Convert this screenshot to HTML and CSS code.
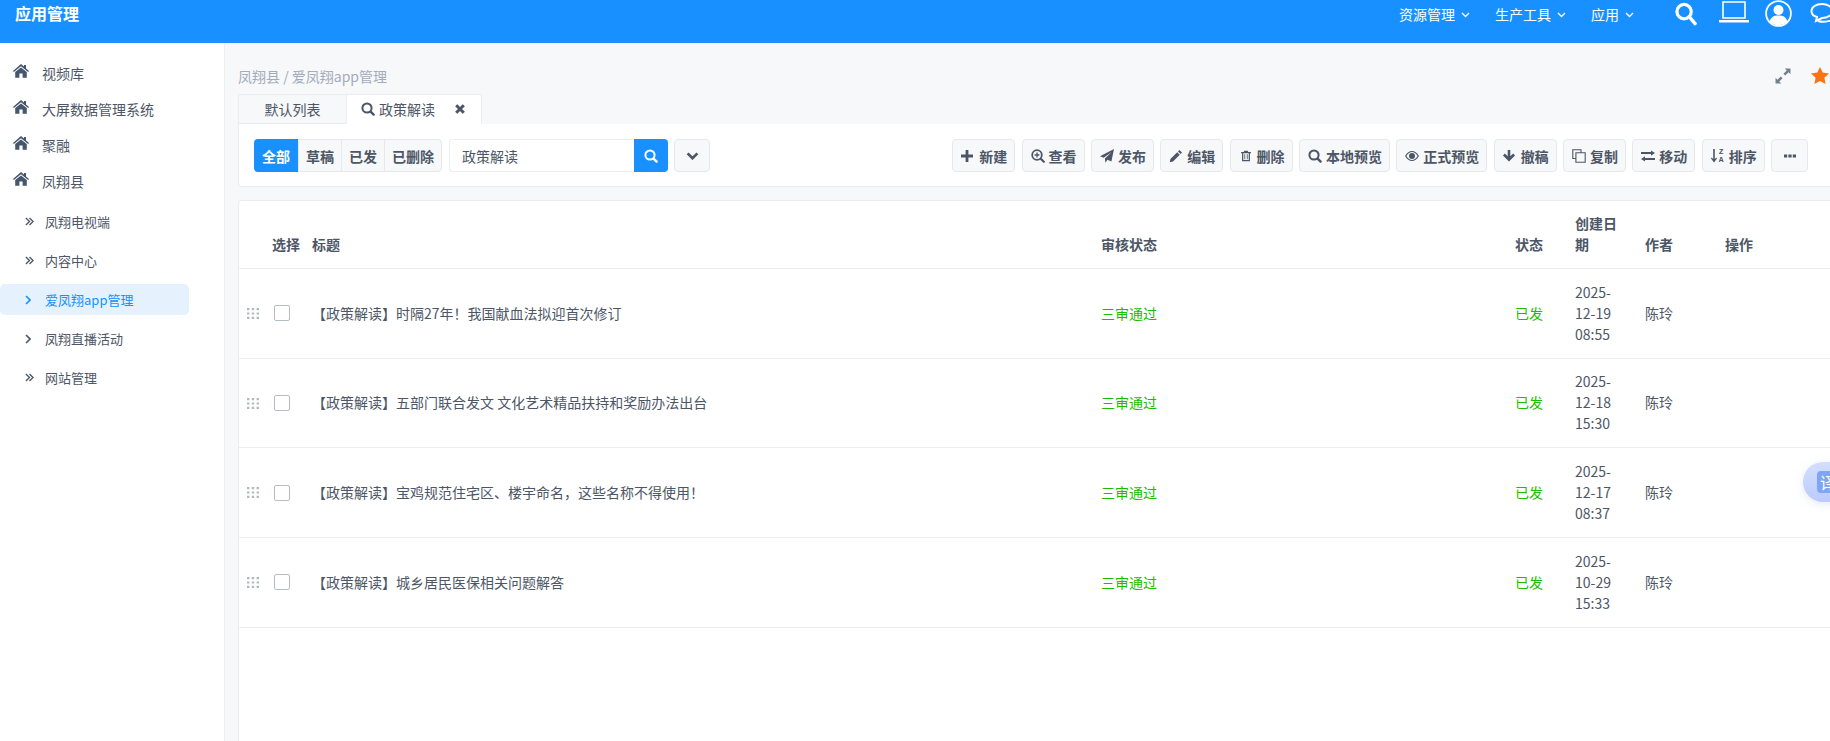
FILE: index.html
```html
<!DOCTYPE html>
<html lang="zh-CN">
<head>
    <meta charset="UTF-8">
    <meta name="viewport" content="width=device-width, initial-scale=1.0">
    <title>应用管理</title>
    <link rel="stylesheet" href="styles.css">
</head>
<body>
    <svg class="sprite" xmlns="http://www.w3.org/2000/svg">
        <symbol id="i-home" viewBox="0 0 16 14"><path d="M8 0 L11 2.6 V1 H13 V4.4 L16 7 L15.2 8 L8 2.2 L0.8 8 L0 7 Z M8 3.4 L13.8 8 V13.8 H9.6 V9.6 H6.4 V13.8 H2.2 V8 Z"/></symbol>
        <symbol id="i-caret" viewBox="0 0 9 6"><path fill="none" stroke="currentColor" stroke-width="1.4" d="M1 1 L4.5 4.5 L8 1"/></symbol>
        <symbol id="i-search" viewBox="0 0 14 14"><path fill="none" stroke="currentColor" stroke-width="2" d="M6 1.4 A4.6 4.6 0 1 0 6 10.6 A4.6 4.6 0 1 0 6 1.4 Z"/><path fill="none" stroke="currentColor" stroke-width="2.4" stroke-linecap="round" d="M9.6 9.6 L12.6 12.6"/></symbol>
        <symbol id="i-close" viewBox="0 0 10 10"><path fill="none" stroke="currentColor" stroke-width="3" d="M1.2 1.2 L8.8 8.8 M8.8 1.2 L1.2 8.8"/></symbol>
        <symbol id="i-down" viewBox="0 0 14 9"><path fill="none" stroke="currentColor" stroke-width="3" d="M1.5 1.5 L7 7 L12.5 1.5"/></symbol>
        <symbol id="i-plus" viewBox="0 -1 14 14"><path d="M4.6 0 H7.4 V4.6 H12 V7.4 H7.4 V12 H4.6 V7.4 H0 V4.6 H4.6 Z"/></symbol>
        <symbol id="i-zoom" viewBox="0 0 14 14"><path fill="none" stroke="currentColor" stroke-width="1.8" d="M6 1.2 A4.8 4.8 0 1 0 6 10.8 A4.8 4.8 0 1 0 6 1.2 Z"/><path fill="none" stroke="currentColor" stroke-width="2.2" stroke-linecap="round" d="M9.8 9.8 L12.8 12.8"/><path fill="none" stroke="currentColor" stroke-width="1.3" d="M6 3.6 V8.4 M3.6 6 H8.4"/></symbol>
        <symbol id="i-plane" viewBox="0 0 14 14"><path d="M14 0 L11.4 12.6 L7.4 10.8 L5.4 13.8 L4.9 9.6 L11.6 3 L3.6 8.8 L0 7.2 Z"/></symbol>
        <symbol id="i-pencil" viewBox="0 0 14 14"><path d="M10.4 1 L13 3.6 L11.6 5 L9 2.4 Z M8.2 3.2 L10.8 5.8 L4 12.6 L0.8 13.2 L1.4 10 Z"/></symbol>
        <symbol id="i-trash" viewBox="-1 -1.5 14 17"><path fill-rule="evenodd" d="M4 0.5 H8 L8.8 2.2 H12 V3.6 H10.8 V13.5 H1.2 V3.6 H0 V2.2 H3.2 Z M2.7 3.6 V12 H9.3 V3.6 Z M4 5 H5 V10.8 H4 Z M7 5 H8 V10.8 H7 Z"/></symbol>
        <symbol id="i-eye" viewBox="0 0 14 10"><path fill-rule="evenodd" d="M0 5 C2 1.6 4.4 0 7 0 C9.6 0 12 1.6 14 5 C12 8.4 9.6 10 7 10 C4.4 10 2 8.4 0 5 Z M1.4 5 C3 7.6 5 8.9 7 8.9 C9 8.9 11 7.6 12.6 5 C11 2.4 9 1.1 7 1.1 C5 1.1 3 2.4 1.4 5 Z M7 2 A3 3 0 1 1 7 8 A3 3 0 1 1 7 2 Z"/></symbol>
        <symbol id="i-arrow" viewBox="0 -1 14 14"><path d="M4.7 0 H7.3 V6.2 L10.2 3.6 L12 5.4 L6 11.6 L0 5.4 L1.8 3.6 L4.7 6.2 Z"/></symbol>
        <symbol id="i-copy" viewBox="0 0 14 14"><path fill="none" stroke="currentColor" stroke-width="1.1" d="M9 3.5 V0.8 H0.8 V9.5 H3.6 M3.9 3.8 H13.2 V13.2 H3.9 Z"/></symbol>
        <symbol id="i-swap" viewBox="0 0 14 11"><path d="M0 1.6 H10 V0 L14 2.6 L10 5.2 V3.6 H0 Z M14 7.4 H4 V5.8 L0 8.4 L4 11 V9.4 H14 Z"/></symbol>
        <symbol id="i-more" viewBox="0 0 12 4"><path d="M0 0.5 H3.2 V3.5 H0 Z M4.4 0.5 H7.6 V3.5 H4.4 Z M8.8 0.5 H12 V3.5 H8.8 Z"/></symbol>
        <symbol id="i-expand" viewBox="0 0 15 15"><path d="M9.2 0.5 H14.5 V5.8 L12.7 4 L9.6 7.1 L7.9 5.4 L11 2.3 Z M0.5 14.5 V9.2 L2.3 11 L5.4 7.9 L7.1 9.6 L4 12.7 L5.8 14.5 Z"/></symbol>
        <symbol id="i-star" viewBox="0 0 18 17"><path d="M9 0 L11.7 5.6 L18 6.5 L13.4 10.8 L14.6 17 L9 14 L3.4 17 L4.6 10.8 L0 6.5 L6.3 5.6 Z"/></symbol>
        <symbol id="i-one" viewBox="0 0 6 10"><path fill="none" stroke="currentColor" stroke-width="1.6" d="M1 1 L5 5 L1 9"/></symbol>
        <symbol id="i-two" viewBox="0 0 10 10"><path fill="none" stroke="currentColor" stroke-width="1.5" d="M1 1 L5 5 L1 9 M5 1 L9 5 L5 9"/></symbol>
        <symbol id="i-grip" viewBox="0 0 12 11"><path d="M0 0 H2.4 V2.2 H0 Z M4.8 0 H7.2 V2.2 H4.8 Z M9.6 0 H12 V2.2 H9.6 Z M0 4.4 H2.4 V6.6 H0 Z M4.8 4.4 H7.2 V6.6 H4.8 Z M9.6 4.4 H12 V6.6 H9.6 Z M0 8.8 H2.4 V11 H0 Z M4.8 8.8 H7.2 V11 H4.8 Z M9.6 8.8 H12 V11 H9.6 Z"/></symbol>
    </svg>

    <header class="topbar">
        <div class="app-title">应用管理</div>
        <nav class="topnav">
            <a class="topnav-link">资源管理<svg class="caret"><use href="#i-caret"/></svg></a>
            <a class="topnav-link">生产工具<svg class="caret"><use href="#i-caret"/></svg></a>
            <a class="topnav-link">应用<svg class="caret"><use href="#i-caret"/></svg></a>
        </nav>
        <div class="top-icons">
            <svg class="top-search" viewBox="0 0 23 24"><circle cx="9.5" cy="9.5" r="7.5" fill="none" stroke="#fff" stroke-width="3.4"/><path d="M15 15 L21 22" fill="none" stroke="#fff" stroke-width="3.6" stroke-linecap="round"/></svg>
            <svg class="top-laptop" viewBox="0 0 30 22"><path d="M4 1 H26 V17 H4 Z" fill="none" stroke="#fff" stroke-width="1.6"/><path d="M0 19 H30 V21.5 H0 Z" fill="#fff"/></svg>
            <svg class="top-user" viewBox="0 0 27 27"><circle cx="13.5" cy="13.5" r="12.4" fill="none" stroke="#fff" stroke-width="1.8"/><circle cx="13.5" cy="10" r="5" fill="#fff"/><path d="M4.8 21.5 C6 16.5 9 15.5 13.5 15.5 C18 15.5 21 16.5 22.2 21.5 C18 26.5 9 26.5 4.8 21.5 Z" fill="#fff"/></svg>
            <svg class="top-chat" viewBox="0 0 32 24"><path d="M12 2 C18 2 22 5 22 9 C22 13 18 16 12 16 L6 19 L7 15 C3 14 1.5 12 1.5 9 C1.5 5 6 2 12 2 Z" fill="none" stroke="#fff" stroke-width="2"/><path d="M8 19 C14 21 24 19 26 14" fill="none" stroke="#fff" stroke-width="2"/></svg>
        </div>
    </header>

    <div class="layout">
        <aside class="sidebar">
            <a class="menu-item"><svg class="menu-icon"><use href="#i-home"/></svg>视频库</a>
            <a class="menu-item"><svg class="menu-icon"><use href="#i-home"/></svg>大屏数据管理系统</a>
            <a class="menu-item"><svg class="menu-icon"><use href="#i-home"/></svg>聚融</a>
            <a class="menu-item"><svg class="menu-icon"><use href="#i-home"/></svg>凤翔县</a>
            <div class="submenu">
                <a class="sub-item"><svg class="sub-icon two"><use href="#i-two"/></svg>凤翔电视端</a>
                <a class="sub-item"><svg class="sub-icon two"><use href="#i-two"/></svg>内容中心</a>
                <a class="sub-item active"><svg class="sub-icon one"><use href="#i-one"/></svg>爱凤翔app管理</a>
                <a class="sub-item"><svg class="sub-icon one"><use href="#i-one"/></svg>凤翔直播活动</a>
                <a class="sub-item"><svg class="sub-icon two"><use href="#i-two"/></svg>网站管理</a>
            </div>
        </aside>

        <main class="content">
            <div class="crumb-row">
                <div class="crumbs">凤翔县 / 爱凤翔app管理</div>
                <div class="crumb-tools">
                    <svg class="expand"><use href="#i-expand"/></svg>
                    <svg class="star"><use href="#i-star"/></svg>
                </div>
            </div>

            <div class="tabs">
                <div class="tab">默认列表</div>
                <div class="tab current">
                    <svg class="tab-search"><use href="#i-search"/></svg>
                    <span>政策解读</span>
                    <svg class="tab-close"><use href="#i-close"/></svg>
                </div>
            </div>

            <section class="toolbar">
                <div class="filter-group">
                    <button class="filter on">全部</button>
                    <button class="filter">草稿</button>
                    <button class="filter">已发</button>
                    <button class="filter">已删除</button>
                </div>
                <div class="search-box">
                    <input class="search-input" type="text" value="政策解读">
                    <button class="search-btn"><svg><use href="#i-search"/></svg></button>
                </div>
                <button class="btn chevron"><svg><use href="#i-down"/></svg></button>

                <div class="actions">
                    <button class="btn"><svg class="ic"><use href="#i-plus"/></svg>新建</button>
                    <button class="btn"><svg class="ic"><use href="#i-zoom"/></svg>查看</button>
                    <button class="btn"><svg class="ic"><use href="#i-plane"/></svg>发布</button>
                    <button class="btn"><svg class="ic"><use href="#i-pencil"/></svg>编辑</button>
                    <button class="btn"><svg class="ic"><use href="#i-trash"/></svg>删除</button>
                    <button class="btn"><svg class="ic"><use href="#i-search"/></svg>本地预览</button>
                    <button class="btn"><svg class="ic"><use href="#i-eye"/></svg>正式预览</button>
                    <button class="btn"><svg class="ic"><use href="#i-arrow"/></svg>撤稿</button>
                    <button class="btn"><svg class="ic"><use href="#i-copy"/></svg>复制</button>
                    <button class="btn"><svg class="ic"><use href="#i-swap"/></svg>移动</button>
                    <button class="btn"><span class="sort-ic"><svg viewBox="0 0 6 14"><path d="M2.2 0 H3.8 V10 L5.6 8.4 L6 9.4 L3 13.6 L0 9.4 L0.4 8.4 L2.2 10 Z"/></svg><span class="sort-az">Z<br>A</span></span>排序</button>
                    <button class="btn more"><svg><use href="#i-more"/></svg></button>
                </div>
            </section>

            <section class="list-card">
                <table class="list">
                    <colgroup>
                        <col class="c-drag"><col class="c-check"><col class="c-title"><col class="c-audit">
                        <col class="c-state"><col class="c-date"><col class="c-author"><col class="c-op">
                    </colgroup>
                    <thead>
                        <tr><th></th><th class="nowrap">选择</th><th>标题</th><th>审核状态</th><th>状态</th><th>创建日期</th><th>作者</th><th>操作</th></tr>
                    </thead>
                    <tbody>
                        <tr>
                            <td class="drag"><svg><use href="#i-grip"/></svg></td>
                            <td><span class="check"></span></td>
                            <td>【政策解读】时隔27年！我国献血法拟迎首次修订</td>
                            <td class="ok">三审通过</td>
                            <td class="ok">已发</td>
                            <td>2025-12-19 08:55</td>
                            <td>陈玲</td>
                            <td></td>
                        </tr>
                        <tr>
                            <td class="drag"><svg><use href="#i-grip"/></svg></td>
                            <td><span class="check"></span></td>
                            <td>【政策解读】五部门联合发文 文化艺术精品扶持和奖励办法出台</td>
                            <td class="ok">三审通过</td>
                            <td class="ok">已发</td>
                            <td>2025-12-18 15:30</td>
                            <td>陈玲</td>
                            <td></td>
                        </tr>
                        <tr>
                            <td class="drag"><svg><use href="#i-grip"/></svg></td>
                            <td><span class="check"></span></td>
                            <td>【政策解读】宝鸡规范住宅区、楼宇命名，这些名称不得使用！</td>
                            <td class="ok">三审通过</td>
                            <td class="ok">已发</td>
                            <td>2025-12-17 08:37</td>
                            <td>陈玲</td>
                            <td></td>
                        </tr>
                        <tr>
                            <td class="drag"><svg><use href="#i-grip"/></svg></td>
                            <td><span class="check"></span></td>
                            <td>【政策解读】城乡居民医保相关问题解答</td>
                            <td class="ok">三审通过</td>
                            <td class="ok">已发</td>
                            <td>2025-10-29 15:33</td>
                            <td>陈玲</td>
                            <td></td>
                        </tr>
                    </tbody>
                </table>
            </section>
        </main>
    </div>

    <div class="translate-float"><span class="translate-badge">译</span></div>
</body>
</html>
```

FILE: styles.css
```css
* {
    box-sizing: border-box;
}
html, body {
    height: 100%;
}
body {
    margin: 0;
    font-family: "Noto Sans CJK SC", "Noto Sans", sans-serif;
    font-size: 14px;
    color: #4d5666;
    background-color: #f6f8fa;
    overflow: hidden;
    display: flex;
    flex-direction: column;
}
.sprite {
    display: none;
}
svg {
    fill: currentColor;
    display: block;
}

/* top bar */
.topbar {
    height: 43px;
    flex: none;
    background-color: #1890ff;
    color: #fff;
    display: flex;
    padding-left: 15px;
}
.app-title {
    font-size: 16px;
    font-weight: 700;
    line-height: 26px;
}
.topnav {
    margin-left: auto;
    display: flex;
    gap: 25px;
    height: 28px;
}
.topnav-link {
    display: flex;
    align-items: center;
    gap: 6px;
    line-height: 28px;
}
.caret {
    width: 9px;
    height: 6px;
    margin-top: 1px;
}
.top-icons {
    display: flex;
    align-items: flex-start;
    margin-left: 41px;
    margin-right: -12px;
    gap: 22px;
}
.top-search {
    width: 22px;
    height: 24px;
    margin-top: 2px;
}
.top-laptop {
    width: 30px;
    height: 22px;
    margin-top: 1px;
}
.top-user {
    width: 27px;
    height: 27px;
    margin-left: -6px;
}
.top-chat {
    width: 32px;
    height: 24px;
    margin-left: -4px;
    margin-top: 2px;
}

.layout {
    flex: 1;
    display: flex;
    min-height: 0;
}

/* sidebar */
.sidebar {
    width: 225px;
    flex: none;
    background-color: #fff;
    border-right: 1px solid #eceef1;
    padding-top: 12px;
}
.menu-item {
    display: flex;
    align-items: center;
    height: 36px;
    padding-left: 13px;
    line-height: 36px;
}
.menu-icon {
    width: 16px;
    height: 14px;
    margin-right: 13px;
    margin-top: -4px;
    color: #46566e;
}
.submenu {
    padding-top: 7px;
}
.sub-item {
    display: flex;
    align-items: center;
    width: 189px;
    height: 31px;
    margin-bottom: 8px;
    font-size: 13px;
    border-radius: 5px;
}
.sub-icon {
    margin-left: 25px;
}
.sub-icon.two {
    width: 9px;
    height: 9px;
    margin-right: 11px;
}
.sub-icon.one {
    width: 6px;
    height: 10px;
    margin-right: 14px;
}
.sub-item.active {
    background-color: #e5f2fe;
    color: #1890ff;
}

/* main column */
.content {
    flex: 1;
    min-width: 0;
    display: flex;
    flex-direction: column;
    padding-left: 13px;
}
.crumb-row {
    height: 51px;
    flex: none;
    display: flex;
    justify-content: space-between;
    align-items: flex-start;
}
.crumbs {
    color: #a3abbb;
    line-height: 20px;
    margin-top: 23px;
}
.crumb-tools {
    display: flex;
    align-items: center;
    margin-top: 24px;
    padding-right: 1px;
    gap: 20px;
}
.expand {
    width: 16px;
    height: 16px;
    color: #75808f;
}
.star {
    width: 18px;
    height: 17px;
    color: #fa7414;
}

/* tabs */
.tabs {
    display: flex;
    height: 30px;
    flex: none;
    position: relative;
    z-index: 1;
}
.tab {
    width: 108px;
    text-align: center;
    line-height: 28px;
    border: 1px solid #eaecef;
    border-right: none;
}
.tab.current {
    width: 136px;
    display: flex;
    align-items: center;
    background-color: #fff;
    border-right: 1px solid #eaecef;
    border-bottom-color: #fff;
    padding-left: 14px;
}
.tab-search {
    width: 14px;
    height: 14px;
    margin-right: 4px;
}
.tab-close {
    width: 10px;
    height: 10px;
    margin-left: 20px;
}

/* toolbar */
.toolbar {
    height: 63px;
    flex: none;
    display: flex;
    align-items: center;
    background-color: #fff;
    border: 1px solid #eaecef;
    border-top: none;
    border-right: none;
    border-radius: 0 0 0 4px;
    padding: 1px 22px 0 15px;
}
button {
    font-family: inherit;
    font-size: 14px;
    color: inherit;
}
.filter-group {
    display: flex;
    height: 33px;
    border: 1px solid #e6e8eb;
    border-radius: 4px;
    background-color: #f6f8fa;
}
.filter {
    height: 100%;
    padding: 0 7px;
    border: none;
    border-left: 1px solid #e6e8eb;
    background: none;
    font-weight: 700;
    line-height: 1;
}
.filter:first-child {
    border-left: none;
}
.filter.on {
    width: 44px;
    margin: -1px 0 -1px -1px;
    height: 33px;
    padding: 0;
    background-color: #1890ff;
    color: #fff;
    border-radius: 4px 0 0 4px;
}
.search-box {
    display: flex;
    margin-left: 7px;
    height: 33px;
}
.search-input {
    width: 185px;
    height: 33px;
    padding: 0 12px;
    border: 1px solid #eceef1;
    border-right: none;
    border-radius: 3px 0 0 3px;
    font-family: inherit;
    font-size: 14px;
    color: #4d5666;
    outline: none;
}
.search-btn {
    width: 34px;
    border: none;
    padding: 0;
    border-radius: 0 4px 4px 0;
    background-color: #1890ff;
    color: #fff;
    display: flex;
    align-items: center;
    justify-content: center;
}
.search-btn svg {
    width: 14px;
    height: 14px;
}
.btn {
    display: flex;
    align-items: center;
    height: 33px;
    padding: 0 7px 0 8px;
    background-color: #f6f8fa;
    border: 1px solid #e6e8eb;
    border-radius: 4px;
    font-weight: 700;
    line-height: 1;
}
.chevron {
    width: 36px;
    margin-left: 6px;
    justify-content: center;
    padding: 0;
}
.chevron svg {
    width: 13px;
    height: 8px;
}
.actions {
    margin-left: auto;
    display: flex;
    gap: 6.35px;
}
.ic {
    width: 14px;
    height: 14px;
    margin-right: 4px;
    flex: none;
}
.sort-ic {
    display: flex;
    align-items: center;
    width: 14px;
    margin-right: 4px;
    gap: 2px;
}
.sort-ic svg {
    width: 6px;
    height: 14px;
    flex: none;
}
.sort-az {
    font-family: "Liberation Mono", monospace;
    font-size: 8px;
    line-height: 8px;
    font-weight: 700;
}
.more {
    width: 37px;
    justify-content: center;
    padding: 0;
}
.more svg {
    width: 12px;
    height: 4px;
}

/* list */
.list-card {
    flex: 1;
    margin-top: 13px;
    background-color: #fff;
    border: 1px solid #eaecef;
    border-right: none;
    border-bottom: none;
    border-radius: 4px 0 0 0;
}
.list {
    width: 100%;
    table-layout: fixed;
    border-collapse: collapse;
}
.c-drag { width: 25px; }
.c-check { width: 40px; }
.c-title { width: 789px; }
.c-audit { width: 414px; }
.c-state { width: 60px; }
.c-date { width: 70px; }
.c-author { width: 80px; }
.list th {
    text-align: left;
    vertical-align: bottom;
    padding: 12px 8px 13px;
    line-height: 21px;
    font-weight: 700;
    border-bottom: 1px solid #ebedf0;
}
.list th.nowrap {
    white-space: nowrap;
}
.list td {
    padding: 12.7px 8px 13px;
    line-height: 21px;
    border-bottom: 1px solid #ebedf0;
}
.list td.ok {
    color: #19be00;
}
.list td.drag {
    padding: 0 0 0 8px;
    color: #b2b8c2;
}
.drag svg {
    width: 12px;
    height: 11px;
}
.check {
    display: block;
    width: 16px;
    height: 16px;
    margin-left: 2px;
    border: 1px solid #b6bcc5;
    border-radius: 2px;
    background-color: #fff;
}

/* floating translate widget */
.translate-float {
    position: absolute;
    left: 1803px;
    top: 462px;
    width: 60px;
    height: 40px;
    border-radius: 20px;
    background: linear-gradient(180deg, #d3dfff, #bccbff);
    box-shadow: 0 2px 8px rgba(150, 170, 240, 0.25);
}
.translate-badge {
    position: absolute;
    left: 14px;
    top: 9px;
    width: 22px;
    height: 22px;
    border-radius: 4px;
    background-color: #7ea6f6;
    color: #fff;
    font-size: 16px;
    line-height: 22px;
    text-align: center;
}
```
